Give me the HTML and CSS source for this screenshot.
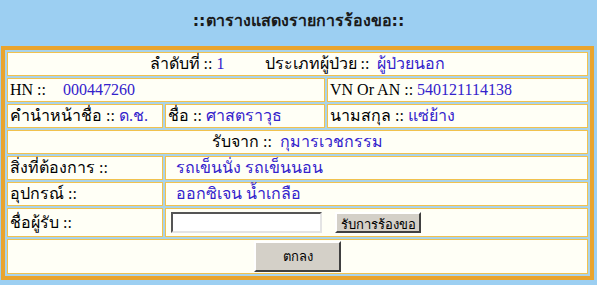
FILE: index.html
```html
<!DOCTYPE html>
<html lang="th">
<head>
<meta charset="utf-8">
<title>ตารางแสดงรายการร้องขอ</title>
<link rel="stylesheet" href="styles.css">
</head>
<body>
<h1 class="title">::ตารางแสดงรายการร้องขอ::</h1>
<table class="req">
  <colgroup>
    <col class="c1"><col class="c2"><col class="c3">
  </colgroup>
  <tr>
    <td colspan="3" class="center">ลำดับที่ :: <span class="v">1</span><span class="sp"></span>ประเภทผู้ป่วย :: &nbsp;<span class="v">ผู้ป่วยนอก</span></td>
  </tr>
  <tr>
    <td colspan="2">HN :: <span class="v hn">000447260</span></td>
    <td>VN Or AN :: <span class="v">540121114138</span></td>
  </tr>
  <tr>
    <td>คำนำหน้าชื่อ :: <span class="v">ด.ช.</span></td>
    <td>ชื่อ :: <span class="v">ศาสตราวุธ</span></td>
    <td>นามสกุล :: <span class="v">แซ่ย้าง</span></td>
  </tr>
  <tr>
    <td colspan="3" class="center">รับจาก :: &nbsp;<span class="v">กุมารเวชกรรม</span></td>
  </tr>
  <tr>
    <td>สิ่งที่ต้องการ ::</td>
    <td colspan="2" class="val"><span class="v ind">รถเข็นนั่ง รถเข็นนอน</span></td>
  </tr>
  <tr>
    <td>อุปกรณ์ ::</td>
    <td colspan="2" class="val"><span class="v ind">ออกซิเจน น้ำเกลือ</span></td>
  </tr>
  <tr class="form-row">
    <td>ชื่อผู้รับ ::</td>
    <td colspan="2" class="val"><input type="text" class="field"><button type="button" class="btn">รับการร้องขอ</button></td>
  </tr>
  <tr class="ok-row">
    <td colspan="3" class="center"><button type="button" class="btn ok">ตกลง</button></td>
  </tr>
</table>
</body>
</html>
```
FILE: styles.css
```css
html, body {
  margin: 0;
  padding: 0;
  background: #9ccff2;
}
body {
  font-family: "Liberation Serif", "Noto Sans", "DejaVu Sans", serif;
  font-size: 16px;
  color: #000;
  padding-top: 10px;
}
.title {
  margin: 0 0 14px;
  text-align: center;
  font-family: "DejaVu Sans", "Noto Sans", sans-serif;
  font-size: 16px;
  font-weight: bold;
  color: #1a1a1a;
  height: 22px;
  line-height: 22px;
}
.req {
  width: 593px;
  margin-left: 1px;
  border: 4px solid #e9a42e;
  border-spacing: 2px 2px;
  background: #a9d3ea;
  table-layout: fixed;
}
.c1 { width: 156px; }
.c2 { width: 160px; }
.req td {
  background: #fffff6;
  border: 1px solid #f1c24e;
  height: 24px;
  box-sizing: border-box;
  padding: 0 2px;
  white-space: nowrap;
  line-height: 20px;
}
.center { text-align: center; }
.req td.val { padding-left: 4px; }
.v { color: #3322cc; }
.ind { margin-left: 6px; }
.hn { margin-left: 13px; }
.sp { display: inline-block; width: 40px; }
.form-row td { height: 29px; }
.field {
  box-sizing: border-box;
  width: 151px;
  height: 21px;
  border: 2px solid;
  border-color: #555 #e4e4e4 #e4e4e4 #555;
  margin: 0 13px 0 1px;
  vertical-align: middle;
  padding: 1px;
  background: #fff;
}
.btn {
  box-sizing: border-box;
  font-family: "DejaVu Sans", "Noto Sans", sans-serif;
  font-size: 13px;
  background: #d4d0c8;
  border: 2px solid;
  border-color: #fff #404040 #404040 #fff;
  width: 86px;
  height: 21px;
  padding: 0;
  vertical-align: middle;
  color: #000;
}
.ok-row td { height: 35px; }
.ok {
  width: 87px;
  height: 31px;
}
```
